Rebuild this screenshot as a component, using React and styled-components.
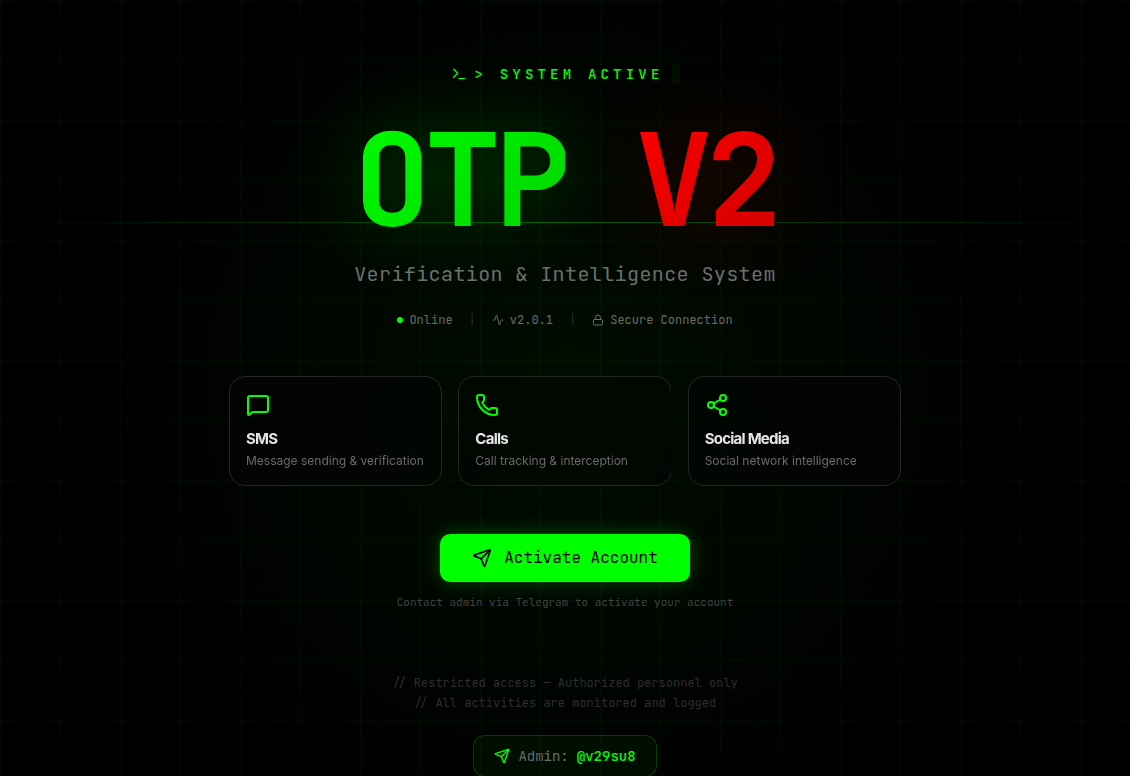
import React from 'react';
import styled, { createGlobalStyle } from 'styled-components';
import { Terminal, Activity, Lock, MessageSquare, Phone, Share2, Send } from 'lucide-react';

const features = [
    { id: 'sms', icon: MessageSquare, title: 'SMS', text: 'Message sending & verification' },
    { id: 'calls', icon: Phone, title: 'Calls', text: 'Call tracking & interception', clipped: true },
    { id: 'social', icon: Share2, title: 'Social Media', text: 'Social network intelligence' },
];

function App() {
    return (
        <>
            <GlobalStyle />
            <Page>
                <Backdrop />
                <ScanLine />
                <Content>
                    <SystemLine>
                        <Terminal size={16} />
                        <span>&gt; SYSTEM ACTIVE</span>
                        <Cursor />
                    </SystemLine>
                    <Title>
                        <TitleWord $from="#00ff00" $to="#00d200" $glow="rgba(0, 255, 0, 0.3)">OTP</TitleWord>
                        {' '}
                        <TitleWord $from="#ff0000" $to="#d00000" $glow="rgba(255, 0, 0, 0.2)">V2</TitleWord>
                    </Title>
                    <Subtitle>Verification &amp; Intelligence System</Subtitle>
                    <Status>
                        <StatusItem><Dot />Online</StatusItem>
                        <Divider>|</Divider>
                        <StatusItem><Activity size={12} />v2.0.1</StatusItem>
                        <Divider>|</Divider>
                        <StatusItem><Lock size={12} />Secure Connection</StatusItem>
                    </Status>
                    <Features>
                        {features.map(({ id, icon: Icon, title, text, clipped }) => (
                            <Card key={id} $clipped={clipped}>
                                <Icon size={24} />
                                <h3>{title}</h3>
                                <p>{text}</p>
                            </Card>
                        ))}
                    </Features>
                    <ActivateButton type="button">
                        <Send size={20} />
                        Activate Account
                    </ActivateButton>
                    <Hint>Contact admin via Telegram to activate your account</Hint>
                    <Footer>
                        <p>// Restricted access — Authorized personnel only</p>
                        <p>// All activities are monitored and logged</p>
                        <AdminLink href="#admin">
                            <Send size={16} />
                            <span>Admin:</span>
                            <strong>@v29su8</strong>
                        </AdminLink>
                    </Footer>
                </Content>
            </Page>
        </>
    );
}

const mono = `'JetBrains Mono', 'DejaVu Sans Mono', 'Liberation Mono', monospace`;

const GlobalStyle = createGlobalStyle`
    * {
        box-sizing: border-box;
        margin: 0;
        padding: 0;
    }

    body {
        background: #fff;
        padding-right: 15px;
        font-family: Inter, 'Liberation Sans', sans-serif;
    }
`;

const Page = styled.div`
    position: relative;
    min-height: 100vh;
    overflow: hidden;
    background: #000;
    color: #e5e5e5;
`;

const Backdrop = styled.div`
    position: absolute;
    inset: 0;
    background:
        linear-gradient(rgba(0, 255, 0, 0.03) 1px, transparent 1px) 0 0 / 60px 60px,
        linear-gradient(90deg, rgba(0, 255, 0, 0.03) 1px, transparent 1px) 0 0 / 60px 60px,
        radial-gradient(circle at 50% 50%, rgba(0, 255, 0, 0.05), transparent 460px);
`;

const ScanLine = styled.div`
    position: absolute;
    top: 222px;
    left: 0;
    right: 0;
    height: 1px;
    background: linear-gradient(90deg, transparent, rgba(0, 255, 0, 0.35), transparent);
`;

const Content = styled.main`
    position: relative;
    display: flex;
    flex-direction: column;
    align-items: center;
    max-width: 720px;
    margin: 0 auto;
    padding: 64px 24px 0;
    font-family: ${mono};
`;

const SystemLine = styled.div`
    display: flex;
    align-items: center;
    gap: 8px;
    color: #00ff00;
    font-size: 14px;
    font-weight: 500;
    line-height: 20px;
    letter-spacing: 0.3em;
`;

const Cursor = styled.span`
    width: 8px;
    height: 20px;
    background: rgba(0, 255, 0, 0.05);
`;

const Title = styled.h1`
    margin-top: 32px;
    font-size: 128px;
    font-weight: 700;
    line-height: 128px;
    letter-spacing: -0.05em;
    white-space: nowrap;
`;

const TitleWord = styled.span`
    color: transparent;
    background: linear-gradient(135deg, ${({ $from, $to }) => `${$from}, ${$to}`});
    background-clip: text;
    filter: drop-shadow(0 0 40px ${({ $glow }) => $glow});
`;

const Subtitle = styled.p`
    margin-top: 16px;
    color: #6f6f6f;
    font-size: 20px;
    line-height: 28px;
    letter-spacing: 0.02em;
`;

const Status = styled.div`
    display: flex;
    align-items: center;
    gap: 16px;
    margin-top: 24px;
    color: #6b6b6b;
    font-size: 12px;
    line-height: 16px;
`;

const StatusItem = styled.span`
    display: flex;
    align-items: center;
    gap: 6px;
`;

const Dot = styled.span`
    width: 6px;
    height: 6px;
    border-radius: 50%;
    background: #00ff00;
`;

const Divider = styled.span`
    color: #2a2a2a;
`;

const Features = styled.section`
    display: grid;
    grid-template-columns: repeat(3, 1fr);
    gap: 16px;
    width: 100%;
    margin-top: 48px;
    font-family: Inter, 'Liberation Sans', sans-serif;
`;

const Card = styled.article`
    padding: 16px;
    border: 1px solid #262626;
    border-radius: 16px;
    background: rgba(4, 4, 4, 0.5);
    backdrop-filter: blur(12px);
    clip-path: ${({ $clipped }) => ($clipped ? 'inset(0 1px 0 0)' : 'none')};

    svg {
        display: block;
        margin-bottom: 12px;
        color: #00ff00;
    }

    h3 {
        margin-bottom: 4px;
        font-size: 15px;
        font-weight: 700;
        line-height: 20px;
        letter-spacing: -0.05em;
    }

    p {
        color: #6b6b6b;
        font-size: 12px;
        line-height: 16px;
        white-space: nowrap;
    }
`;

const ActivateButton = styled.button`
    display: flex;
    align-items: center;
    gap: 12px;
    margin-top: 48px;
    padding: 12px 32px;
    border: none;
    border-radius: 10px;
    background: #00ff00;
    box-shadow: 0 0 20px rgba(0, 255, 0, 0.3);
    color: #000;
    font-family: inherit;
    font-size: 16px;
    line-height: 24px;
    cursor: pointer;
`;

const Hint = styled.p`
    margin-top: 12px;
    color: #444;
    font-size: 11px;
    line-height: 16px;
`;

const Footer = styled.footer`
    display: flex;
    flex-direction: column;
    align-items: center;
    margin-top: 63px;
    color: #2e2e2e;
    font-size: 12px;
    line-height: 20px;
`;

const AdminLink = styled.a`
    display: flex;
    align-items: center;
    gap: 8px;
    margin-top: 22px;
    padding: 10px 20px;
    border: 1px solid rgba(0, 255, 0, 0.2);
    border-radius: 12px;
    background: rgba(0, 255, 0, 0.05);
    color: #6b6b6b;
    font-size: 14px;
    text-decoration: none;

    svg,
    strong {
        color: #00ff00;
        font-weight: 500;
    }
`;

export default App;
